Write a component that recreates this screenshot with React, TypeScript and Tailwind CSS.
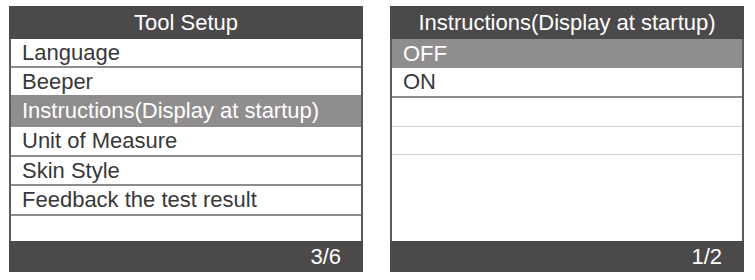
import React from 'react';

const font = { fontFamily: '"Liberation Sans", Arial, sans-serif' };

interface Row {
  label: string;
  h: string;
  selected?: boolean;
  border: string;
}

const leftRows: Row[] = [
  { label: 'Language', h: 'h-[29px]', border: 'border-b-2 border-[#8c8c8c]' },
  { label: 'Beeper', h: 'h-[29px]', border: 'border-b-2 border-[#8c8c8c]' },
  { label: 'Instructions(Display at startup)', h: 'h-[30px]', selected: true, border: 'border-b-2 border-[#8c8c8c]' },
  { label: 'Unit of Measure', h: 'h-[30px]', border: 'border-b-2 border-[#8c8c8c]' },
  { label: 'Skin Style', h: 'h-[29px]', border: 'border-b-2 border-[#8c8c8c]' },
  { label: 'Feedback the test result', h: 'h-[30px]', border: 'border-b-2 border-[#8c8c8c]' },
  { label: '', h: 'h-[25px]', border: '' },
];

const rightRows: Row[] = [
  { label: 'OFF', h: 'h-[29px]', selected: true, border: '' },
  { label: 'ON', h: 'h-[30px]', border: 'border-b-2 border-[#8c8c8c]' },
  { label: '', h: 'h-[29px]', border: 'border-b border-[#d2d2d2]' },
  { label: '', h: 'h-[28px]', border: 'border-b border-[#d2d2d2]' },
  { label: '', h: 'h-[86px]', border: '' },
];

function Panel({ title, rows, page }: { title: string; rows: Row[]; page: string }) {
  return (
    <div className="w-[354px] h-[266px] flex flex-col">
      <div className="h-[33px] bg-[#4b494a] text-white text-[22px] leading-[34px] text-center">{title}</div>
      <div className="flex-1 flex flex-col border-x-2 border-[#5c5c5c] bg-white">
        {rows.map((r, i) => (
          <div
            key={i}
            className={`${r.h} ${r.border} flex items-center pl-[11px] text-[22px] leading-none ${
              r.selected ? 'bg-[#8f8d8e] text-white' : 'text-[#383838]'
            }`}
          >
            {r.label}
          </div>
        ))}
      </div>
      <div className="h-[31px] bg-[#4b494a] text-white text-[22px] leading-[31px] text-right pr-[22px]">{page}</div>
    </div>
  );
}

export default function App() {
  return (
    <div className="w-[755px] h-[280px] bg-white flex gap-[27px] pt-[6px] pl-[9px]" style={font}>
      <Panel title="Tool Setup" rows={leftRows} page="3/6" />
      <Panel title="Instructions(Display at startup)" rows={rightRows} page="1/2" />
    </div>
  );
}
